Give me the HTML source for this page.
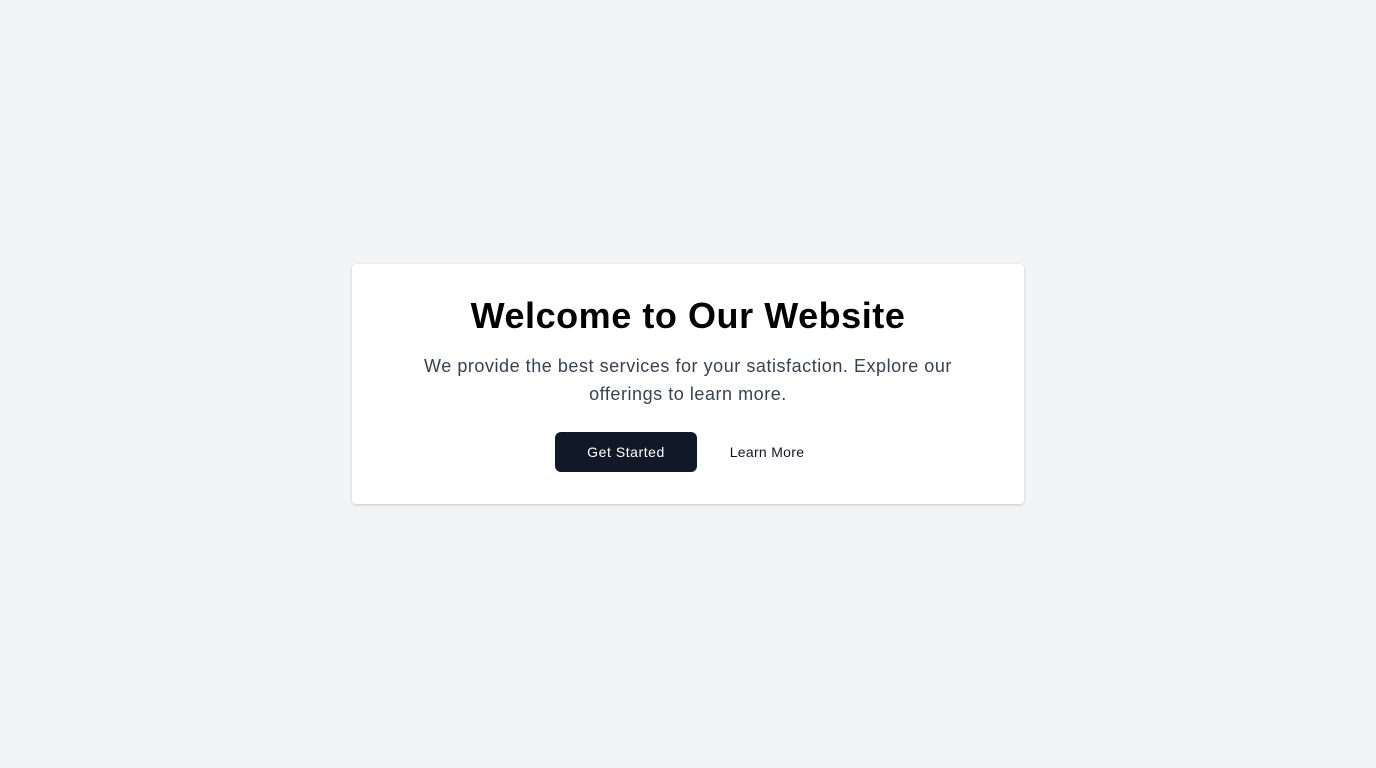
<!DOCTYPE html>
<html><head><style>
html,body{margin:0;padding:0;background:#f3f4f6;width:1376px;height:768px;font-family:"Liberation Sans",sans-serif;}
.card{position:absolute;left:352px;top:264px;width:672px;height:240px;background:#fff;border-radius:4px;box-shadow:0 1px 3px rgba(0,0,0,0.12),0 1px 2px rgba(0,0,0,0.06);text-align:center;}
h1{margin:0;position:absolute;top:32px;left:0;right:0;font-size:36px;line-height:40px;font-weight:700;color:#000;letter-spacing:0.55px;}
p{margin:0;position:absolute;top:88px;left:40px;right:40px;font-size:18px;line-height:28px;color:#374151;letter-spacing:0.54px;}
.b1{position:absolute;left:203px;top:168px;width:142px;height:40px;background:#111827;color:#fff;border-radius:6px;font-size:14px;line-height:40px;letter-spacing:0.55px;}
.b2{position:absolute;left:358px;top:168px;width:114px;height:40px;color:#111827;font-size:14px;line-height:40px;letter-spacing:0.3px;}
</style></head><body>
<div class="card">
<h1>Welcome to Our Website</h1>
<p>We provide the best services for your satisfaction. Explore our<br>offerings to learn more.</p>
<div class="b1">Get Started</div>
<div class="b2">Learn More</div>
</div>
</body></html>
